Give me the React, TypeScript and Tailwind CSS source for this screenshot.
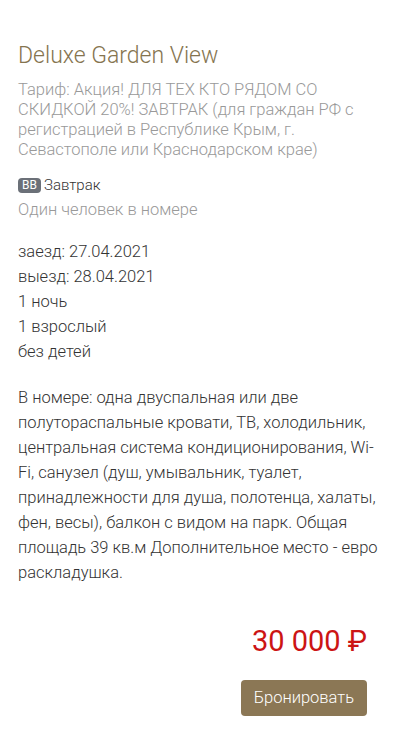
export default function App() {
  return (
    <div className="min-h-screen bg-white pl-[18px] pr-[16px] pt-[39px] font-['Roboto',sans-serif] font-light">
      <h1 className="text-[23px] leading-[34px] text-[#85744f]">Deluxe Garden View</h1>

      <p className="mt-[7px] text-[16.5px] leading-[20px] text-[#999999]">
        Тариф: Акция! ДЛЯ ТЕХ КТО РЯДОМ СО СКИДКОЙ 20%! ЗАВТРАК (для граждан РФ с регистрацией в Республике Крым, г. Севастополе или Краснодарском крае)
      </p>

      <div className="mt-[14px] flex items-center gap-[3px] text-[15px] text-[#333333]">
        <span className="rounded-[4px] bg-[#6b7078] px-[4px] text-[12px] leading-[15px] font-normal text-white">BB</span>
        <span>Завтрак</span>
      </div>

      <p className="mt-[2px] text-[16.5px] leading-[22px] text-[#999999]">Один человек в номере</p>

      <div className="mt-[18px] text-[16.5px] leading-[25px] text-[#333333]">
        <div>заезд: 27.04.2021</div>
        <div>выезд: 28.04.2021</div>
        <div>1 ночь</div>
        <div>1 взрослый</div>
        <div>без детей</div>
      </div>

      <p className="mt-[21px] text-[16.5px] leading-[25px] text-[#333333]">
        В номере: одна двуспальная или две полутораспальные кровати, ТВ, холодильник, центральная система кондиционирования, Wi-Fi, санузел (душ, умывальник, туалет, принадлежности для душа, полотенца, халаты, фен, весы), балкон с видом на парк. Общая площадь 39 кв.м Дополнительное место - евро раскладушка.
      </p>

      <div className="mt-[36px] flex flex-col items-end pr-[17px]">
        <div className="text-[29px] leading-[40px] font-normal text-[#cc1414]">30 000 ₽</div>
        <button className="mt-[19px] rounded-[4px] bg-[#8b7755] px-[13px] py-[8px] text-[16.5px] leading-[20px] text-white">
          Бронировать
        </button>
      </div>
    </div>
  );
}
